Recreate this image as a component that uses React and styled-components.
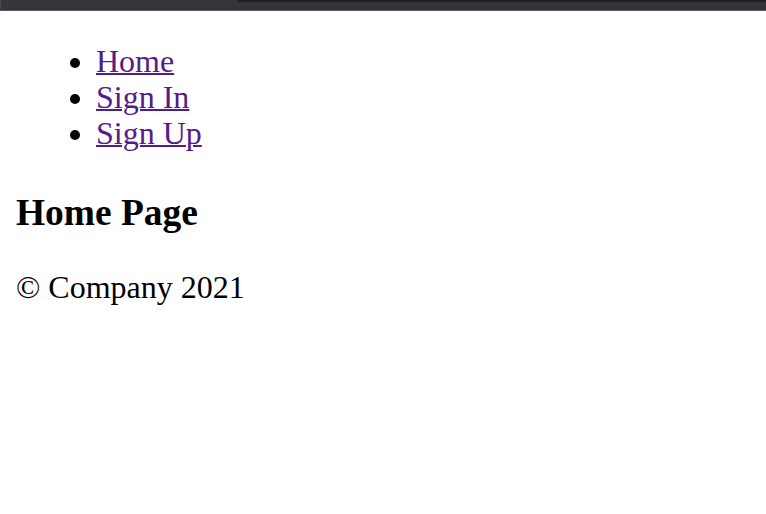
import React from "react";
import styled, { createGlobalStyle } from "styled-components";

const Global = createGlobalStyle`
  html, body { margin: 0; padding: 0; background: #ffffff; }
  body { font-family: "Liberation Serif", "Times New Roman", serif; font-size: 32px; color: #000; }
`;

const ChromeBar = styled.div`
  height: 10px;
  background: #35363a;
  border-bottom: 1px solid #5d5d60;
  border-left: 1px solid #4a4a4d;
  display: flex;
  justify-content: flex-end;
  align-items: flex-start;
`;

const Tab = styled.div`
  width: 529px;
  height: 2px;
  background: #202124;
  border-top-left-radius: 3px;
`;

const Content = styled.div`
  padding: 0 16px;
  display: flow-root;
`;

const NavList = styled.ul`
  margin: 32px 0;
  padding-left: 80px;
  list-style: disc;
`;

const NavItem = styled.li`
  line-height: 36px;
`;

const NavLink = styled.a`
  color: #551a8b;
  text-decoration: underline;
  text-decoration-thickness: 2px;
`;

const Heading = styled.h3`
  font-size: 37.44px;
  font-weight: bold;
  margin: 39.5px 0 35.5px;
`;

const Footer = styled.footer`
  margin: 0 0 37.44px;
`;

export default function App() {
  return (
    <>
      <Global />
      <ChromeBar>
        <Tab />
      </ChromeBar>
      <Content>
        <NavList>
          <NavItem><NavLink href="#">Home</NavLink></NavItem>
          <NavItem><NavLink href="#">Sign In</NavLink></NavItem>
          <NavItem><NavLink href="#">Sign Up</NavLink></NavItem>
        </NavList>
        <Heading>Home Page</Heading>
        <Footer>© Company 2021</Footer>
      </Content>
    </>
  );
}
